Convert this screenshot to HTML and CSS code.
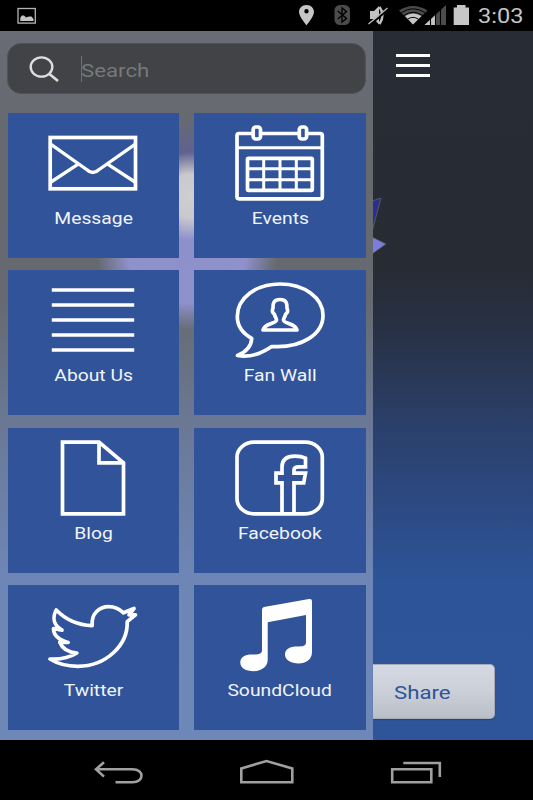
FILE: index.html
```
<!DOCTYPE html>
<html lang="en">
<head>
    <meta charset="UTF-8">
    <meta name="viewport" content="width=device-width, initial-scale=1.0">
    <title>Menu</title>
    <link rel="stylesheet" href="styles.css">
</head>
<body>
    <div class="phone">
        <header class="status-bar">
            <svg class="status-icon picture" width="20" height="18" viewBox="0 0 20 18">
                <rect x="1" y="1.5" width="17.3" height="14.6" fill="none" stroke="#b4b4b4" stroke-width="1.3"/>
                <path d="M3.3 14V10.5L5 8.500H7L9 10.500L12 9.500H14.500L16.500 12V14Z" fill="#c4c4c4"/>
            </svg>
            <svg class="status-icons" width="184" height="24" viewBox="296 3 184 24">
                <!-- location -->
                <path fill-rule="evenodd" d="M306.500 5C302 5 299 8.300 299 12C299 16.500 306.500 25.300 306.500 25.300S314 16.500 314 12C314 8.300 311 5 306.500 5ZM306.500 9A2.200 2.200 0 1 1 306.500 13.400A2.200 2.200 0 1 1 306.500 9Z" fill="#c6c6c6"/>
                <!-- bluetooth -->
                <rect x="334.500" y="5" width="15.500" height="20" rx="5.500" fill="#4b4b4b"/>
                <path d="M337.800 11L346.500 18.500L342 22V8L346.500 11.500L337.800 19" fill="none" stroke="#000" stroke-width="1.400"/>
                <!-- muted -->
                <path d="M370 11H374L379 6V24.500L374 19H370Z" fill="#c2c2c2"/>
                <path d="M379.500 7Q385.500 15 379.500 24" fill="none" stroke="#c2c2c2" stroke-width="2.400"/>
                <path d="M369.500 25.500L388 9.500" stroke="#000" stroke-width="2"/>
                <path d="M368.500 24L387.500 8" stroke="#b5b5b5" stroke-width="1.400"/>
                <!-- wifi -->
                <path d="M399 10.500Q413 1.500 427.500 10.500L413 24.500Z" fill="#4b4b4b"/>
                <path d="M405 16Q413 11 421.500 16L413 24.500Z" fill="#c6c6c6"/>
                <path d="M401.500 12.500Q413 5 425 12.500M404 15.500Q413 9 422.500 15.500M407.500 19.200Q413 15.500 418.500 19.200" fill="none" stroke="#000" stroke-width="1"/>
                <!-- signal -->
                <path d="M446 5V25H424.500Z" fill="#4b4b4b"/>
                <path d="M435 15.200V25H424.500Z" fill="#c6c6c6"/>
                <path d="M430.500 17V26M435.500 13V26M440.500 8V26" stroke="#000" stroke-width="1.100"/>
                <!-- battery -->
                <path d="M453.700 7.500H457V5H465.500V7.500H469V25H453.700Z" fill="#c6c6c6"/>
            </svg>
            <span class="clock">3:03</span>
        </header>

        <div class="screen">
            <aside class="drawer">
                <div class="search">
                    <svg width="32" height="28" viewBox="0 0 32 28">
                        <ellipse cx="12.500" cy="12" rx="10.800" ry="9.600" fill="none" stroke="#ddd" stroke-width="2.400"/>
                        <path d="M19.800 18.500L29 26" stroke="#ddd" stroke-width="2.800"/>
                    </svg>
                    <span class="cursor"></span>
                    <span class="placeholder">Search</span>
                </div>

                <nav class="tiles">
                    <a class="tile">
                        <svg class="icon" viewBox="0 0 96 80">
                            <rect x="5.200" y="16.500" width="85.300" height="51.300"/>
                            <path d="M6 23.300L41.500 48.500Q47.800 54.500 54.200 48.500L90 23.300M6 61L32.800 43.300M90 61L63 43.300" stroke-width="3.300"/>
                        </svg>
                        <span>Message</span>
                    </a>
                    <a class="tile">
                        <svg class="icon" viewBox="0 0 96 80">
                            <rect x="5" y="12.500" width="85.300" height="65.300" rx="2"/>
                            <path d="M5 26.800H90" stroke-width="3"/>
                            <rect class="ring" x="21.200" y="6" width="7.300" height="12" rx="2.500"/>
                            <rect class="ring" x="67.300" y="6" width="7.300" height="12" rx="2.500"/>
                            <rect x="15.500" y="37.300" width="64.800" height="32" rx="1"/>
                            <path d="M31.700 37V70M48 37V70M64.300 37V70M15 47.800H80M15 58.800H80" stroke-width="3"/>
                        </svg>
                        <span>Events</span>
                    </a>
                    <a class="tile">
                        <svg class="icon" viewBox="0 0 96 80">
                            <path d="M6.800 12H89.200M6.800 27H89.200M6.800 42H89.200M6.800 57H89.200M6.800 72H89.200"/>
                        </svg>
                        <span>About Us</span>
                    </a>
                    <a class="tile">
                        <svg class="icon round" viewBox="0 0 96 80">
                            <path d="M48 6C72 6 91 19.500 91 37.500C91 56 70 70.500 39.700 68.500C28 76.500 16 79.500 5.500 77.500C14 74 19.500 68 19.700 60.300C10 55 5.300 47 5.300 38.500C5.300 20 24 6 48 6Z"/>
                            <path d="M48 21.500C42 21.500 40.500 25 41 30.500C39.500 32 40.500 35 42.300 36C43 39 44.500 40 44.500 42C44.500 46 32 45 31 52H65C64 45 51.500 46 51.500 42C51.500 40 53 39 53.700 36C55.500 35 56.500 32 55 30.500C55.500 25 54 21.500 48 21.500Z"/>
                        </svg>
                        <span>Fan Wall</span>
                    </a>
                    <a class="tile">
                        <svg class="icon" viewBox="0 0 96 80">
                            <path d="M17.500 6.200H54L78.500 26.800V77.800H17.500ZM54 6.200V26.800H78.500"/>
                        </svg>
                        <span>Blog</span>
                    </a>
                    <a class="tile">
                        <svg class="icon" viewBox="0 0 96 80">
                            <rect x="5" y="6.200" width="85.300" height="71.600" rx="17" ry="15"/>
                            <path d="M50 77V46.800H44V37.200H50V31C50 23 55 20.200 63 20.200C67 20.200 71 21 73.500 22.200V30.800H67Q62 30.800 62 34V37.200H73.500L71.700 46.800H62V77"/>
                        </svg>
                        <span>Facebook</span>
                    </a>
                    <a class="tile">
                        <svg class="icon round" viewBox="0 0 96 80">
                            <path d="M11.200 17C20 26 31 32 47.200 32.700C46 21 54 13.700 63.800 13.700C70 13.700 74.500 16 78.500 19.800L89 15.500L84 21.800L90.500 21.800L82.200 28.700C83 52 61 73.300 32.800 73.300C22 73.300 13 71 5 66C15 66.500 24 65 31.800 60C22 59 17 55 14.800 49.300L23.200 49.500C14 47 8.500 42 8.500 35.500L17 37.200C8 32 7.500 24 11.200 17Z"/>
                        </svg>
                        <span>Twitter</span>
                    </a>
                    <a class="tile">
                        <svg class="icon" viewBox="0 0 96 80">
                            <path class="solid" d="M30 16.500Q30 14.500 32 14L77 6Q80 5.500 80 8V59C80 66.500 74 70.500 66.500 70.500C59 70.500 53 67 53 61.500C53 56 58 53.500 65 53.500C71 53.500 74 53 74 49V22L35.700 29.300V67C35.700 74 29 78.200 21.500 78.200C14 78.200 8.300 75 8.300 69.500C8.300 64 13 61.500 20 61.500C27 61.500 30 61 30 57Z"/>
                        </svg>
                        <span>SoundCloud</span>
                    </a>
                </nav>
            </aside>

            <main class="page">
                <div class="menu-button">
                    <i></i>
                    <i></i>
                    <i></i>
                </div>
                <svg class="star" width="15" height="58" viewBox="0 0 15 58">
                    <path d="M-1 3L8 0L-1 34Z" fill="#2c2e91" stroke="#57585f"/>
                    <path d="M-1 39L13 46L-1 56Z" fill="#7a7ddb" stroke="#57585f" stroke-width=".6"/>
                </svg>
                <div class="share"><span>Share</span></div>
            </main>
        </div>

        <footer class="nav-bar">
            <svg width="533" height="60" viewBox="0 0 533 60">
                <g fill="none" stroke="#a0a0a0" stroke-width="2.600">
                    <path d="M96 29.300H132.500C144.500 29.300 144.500 42.200 132.500 42.200H115.500M104 22.200L96 29.300L104 36.600"/>
                    <path d="M241.300 42.200V28.500L266.500 21L292.300 28.500V42.200Z"/>
                    <path d="M392.200 29.300H431.300V42.200H392.200ZM403.300 23H439.800V37"/>
                </g>
            </svg>
        </footer>
    </div>
</body>
</html>
```

FILE: styles.css
```
* {
    box-sizing: border-box;
}
body {
    margin: 0;
    font-family: Roboto, "Liberation Sans", sans-serif;
    background: #000;
}
.phone {
    width: 533px;
    height: 800px;
    display: flex;
    flex-direction: column;
    overflow: hidden;
}
.status-bar {
    height: 31px;
    display: flex;
    align-items: flex-start;
    background: #000;
}
.picture {
    margin: 7px 0 0 17px;
}
.status-icons {
    margin: 3px 0 0 259px;
}
.clock {
    margin-left: -2px;
    font-size: 20.5px;
    line-height: 33px;
    color: #c6c6c6;
    transform: scaleX(1.15);
    transform-origin: left;
}
.screen {
    height: 709px;
    display: flex;
    background: linear-gradient(#282c35 0%, #272b33 33%, #283144 42%, #2b416e 57%, #2d5499 78%, #2e549a 100%);
}
.drawer {
    width: 373px;
    padding: 12px 7px 0;
    background:
        radial-gradient(ellipse 40px 44px at 190px 165px, #cfcfd2 0%, #c8c8ce 50%, transparent 100%),
        radial-gradient(ellipse 90px 76px at 187px 222px, #8e90cc 0%, #8f91cd 65%, transparent 100%),
        radial-gradient(ellipse 40px 40px at 187px 125px, #5f6193 0%, transparent 100%),
        linear-gradient(#696b75 0%, #66696e 20%, #666a70 38%, #6a7894 55%, #6e86b6 77%, #6d88b8 100%);
}
.search {
    height: 51px;
    display: flex;
    align-items: center;
    padding-left: 21px;
    background: #424346;
    border: 1px solid #515257;
    border-radius: 14px;
}
.cursor {
    width: 1.5px;
    height: 26px;
    margin-left: 19.5px;
    background: #707072;
}
.placeholder {
    margin-top: 3px;
    margin-left: -1px;
    font-size: 19px;
    color: #77787a;
    transform: scaleX(1.17);
    transform-origin: left;
}
.tiles {
    display: grid;
    grid-template-columns: 171.4px 172px;
    grid-auto-rows: 145px;
    gap: 12.5px 15px;
    margin: 18.6px 0 0 0.6px;
}
.tile {
    display: flex;
    flex-direction: column;
    align-items: center;
    padding-top: 8px;
    background: #305399;
    color: #f1f4fa;
    font-size: 16.5px;
    line-height: 20px;
}
.tile span {
    margin-top: 8.4px;
    transform: scaleX(1.17);
}
.icon {
    width: 96px;
    height: 80px;
    fill: none;
    stroke: #fff;
    stroke-width: 3.7;
}
.icon.round {
    stroke-linejoin: round;
}
.icon .ring {
    fill: #305399;
}
.icon .solid {
    fill: #fff;
    stroke: none;
}
.page {
    flex: 1;
    display: flex;
    flex-direction: column;
    align-items: flex-start;
}
.menu-button {
    display: flex;
    flex-direction: column;
    gap: 7px;
    margin: 23px 0 0 23px;
}
.menu-button i {
    width: 34px;
    height: 3px;
    background: #fff;
}
.star {
    margin-top: 121px;
}
.share {
    width: 122px;
    height: 55px;
    margin-top: 408px;
    padding-left: 20.5px;
    display: flex;
    align-items: center;
    background: linear-gradient(#d6d9e3, #cbcfd8 50%, #b9bec7);
    border: 1px solid #a5adb9;
    border-left: 0;
    border-radius: 0 5px 5px 0;
    box-shadow: 0 1px 1px #24457f;
    color: #30549a;
    font-size: 19px;
}
.share span {
    margin-top: 2px;
    transform: scaleX(1.17);
    transform-origin: left;
}
.nav-bar {
    height: 60px;
    background: #000;
}
```
